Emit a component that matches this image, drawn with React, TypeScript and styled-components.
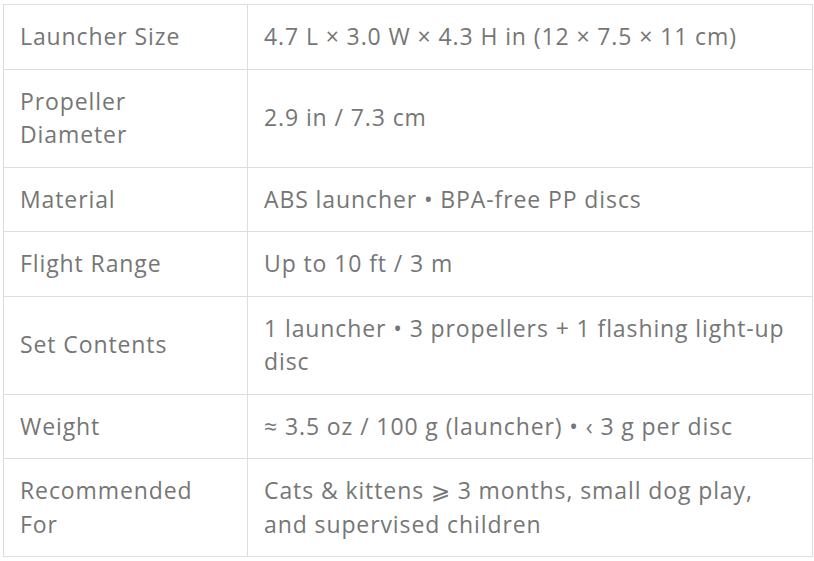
import React from 'react';
import styled, { createGlobalStyle } from 'styled-components';

const GlobalStyle = createGlobalStyle`
  html, body {
    margin: 0;
    padding: 0;
    background: #ffffff;
  }
  body {
    font-family: "Open Sans", "Noto Sans", sans-serif;
  }
`;

type Spec = {
  label: string;
  value: string;
};

const specs: Spec[] = [
  { label: 'Launcher Size', value: '4.7 L × 3.0 W × 4.3 H in (12 × 7.5 × 11 cm)' },
  { label: 'Propeller Diameter', value: '2.9 in / 7.3 cm' },
  { label: 'Material', value: 'ABS launcher • BPA-free PP discs' },
  { label: 'Flight Range', value: 'Up to 10 ft / 3 m' },
  { label: 'Set Contents', value: '1 launcher • 3 propellers + 1 flashing light-up disc' },
  { label: 'Weight', value: '≈ 3.5 oz / 100 g (launcher) • ‹ 3 g per disc' },
  { label: 'Recommended For', value: 'Cats & kittens ⩾ 3 months, small dog play, and supervised children' },
];

const App = () => {
  return (
    <>
      <GlobalStyle />
      <Page>
        <SpecTable>
          <tbody>
            {specs.map((s) => (
              <Row key={s.label}>
                <LabelCell>{s.label}</LabelCell>
                <ValueCell>{s.value}</ValueCell>
              </Row>
            ))}
          </tbody>
        </SpecTable>
      </Page>
    </>
  );
};

const Page = styled.div`
  padding: 4px 2px 0 3px;
`;

const SpecTable = styled.table`
  width: 810px;
  border-collapse: collapse;
  table-layout: fixed;
  color: #767676;
  font-size: 23px;
  line-height: 33.5px;
  letter-spacing: 0.9px;
`;

const Row = styled.tr`
  border: 1px solid #dddddd;
`;

const LabelCell = styled.td`
  width: 211px;
  padding: 15px 16px;
  border: 1px solid #dddddd;
  vertical-align: middle;
`;

const ValueCell = styled.td`
  padding: 15px 20px 15px 16px;
  border: 1px solid #dddddd;
  vertical-align: middle;
`;

export default App;
